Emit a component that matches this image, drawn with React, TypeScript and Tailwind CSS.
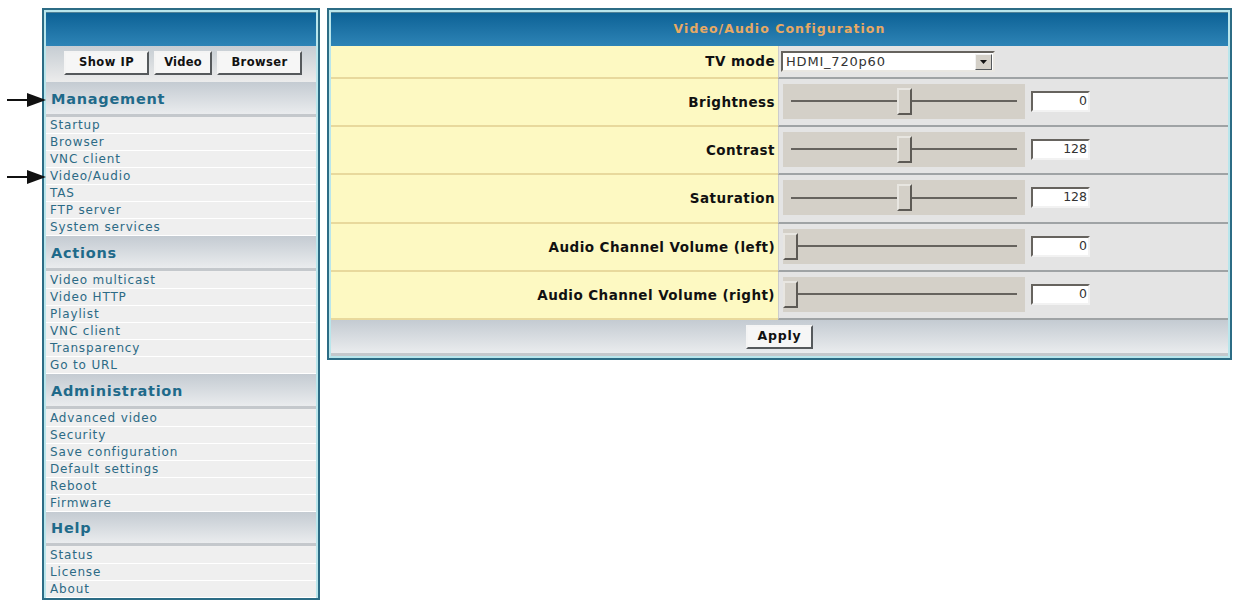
const sections = [
  { title: "Management", height: "h-[35px]", list: "pt-0", items: ["Startup", "Browser", "VNC client", "Video/Audio", "TAS", "FTP server", "System services"] },
  { title: "Actions", height: "h-[35px]", list: "pt-[1px]", items: ["Video multicast", "Video HTTP", "Playlist", "VNC client", "Transparency", "Go to URL"] },
  { title: "Administration", height: "h-[35px]", list: "pt-[1px]", items: ["Advanced video", "Security", "Save configuration", "Default settings", "Reboot", "Firmware"] },
  { title: "Help", height: "h-[34px]", list: "pt-[1px]", items: ["Status", "License", "About"] },
];

const sliders = [
  { label: "Brightness", pos: 114, value: "0", height: "h-[48px]" },
  { label: "Contrast", pos: 114, value: "128", height: "h-[48px]" },
  { label: "Saturation", pos: 114, value: "128", height: "h-[49px]" },
  { label: "Audio Channel Volume (left)", pos: 0, value: "0", height: "h-[48px]" },
  { label: "Audio Channel Volume (right)", pos: 0, value: "0", height: "h-[48px]" },
];

function Arrow({ top }: { top: string }) {
  return (
    <svg className={`absolute left-[7px] ${top}`} width="40" height="16" viewBox="0 0 40 16">
      <rect x="0" y="7" width="22" height="2" fill="#111" />
      <polygon points="20,1 39,8 20,15" fill="#111" />
    </svg>
  );
}

function RaisedButton({ label, width, text }: { label: string; width: string; text: string }) {
  return (
    <button
      className={`h-[24px] ${width} ${text} border-2 border-t-[#f4f4f4] border-l-[#f4f4f4] border-r-[#55595c] border-b-[#55595c] bg-[#f6f6f6] font-bold text-[#111]`}
    >
      {label}
    </button>
  );
}

function Slider({ pos, value }: { pos: number; value: string }) {
  return (
    <div className="flex items-center pb-[2px]">
      <div className="relative ml-[4px] flex h-[35px] w-[242px] items-center bg-[#d4d0c8] pl-[8px]">
        <div className="h-[2px] w-[226px] bg-[#66635e]" />
        <div
          className="absolute top-[4px] h-[27px] w-[15px] border-2 border-t-[#e8e6e1] border-l-[#e8e6e1] border-r-[#5d5a55] border-b-[#5d5a55] bg-[#d4d0c8]"
          style={{ left: pos }}
        />
      </div>
      <div className="ml-[6px] flex h-[21px] w-[59px] items-center justify-end border-2 border-t-[#66635e] border-l-[#66635e] border-r-[#f2f2f2] border-b-[#f2f2f2] bg-white pr-[1px] text-[12.5px] text-[#333]">
        {value}
      </div>
    </div>
  );
}

export default function App() {
  return (
    <div className="relative flex min-h-[601px] items-start gap-[7px] bg-white pl-[42px] pt-[8px] font-['DejaVu_Sans','Liberation_Sans',sans-serif]">
      <Arrow top="top-[92px]" />
      <Arrow top="top-[169px]" />

      <aside className="w-[278px] border-2 border-[#2c6c85] bg-[#f0f0f0]">
        <div className="border-2 border-b-0 border-[#b9e6ec]">
          <div className="h-[34px] border-t border-[#4f8298] bg-gradient-to-b from-[#0b6296] to-[#2d84b6]" />
          <div className="flex h-[36px] items-center gap-[5px] bg-gradient-to-b from-[#c6cdd3] to-[#ececec] pb-[2px] pl-[18px]">
            <RaisedButton label="Show IP" width="w-[85px]" text="text-[11.5px] tracking-[0.5px]" />
            <RaisedButton label="Video" width="w-[58px]" text="text-[11.5px] tracking-[0.2px]" />
            <RaisedButton label="Browser" width="w-[85px]" text="text-[11.5px] tracking-[0.4px]" />
          </div>
          {sections.map((section) => (
            <section key={section.title}>
              <h2 className={`flex ${section.height} items-center border-b-[3px] border-[#c4c8cc] bg-gradient-to-b from-[#c4cbd2] to-[#eaecee] pl-[5px] pt-[3px] text-[14.5px] font-bold tracking-[0.75px] text-[#1f6a8a]`}>
                {section.title}
              </h2>
              <ul className={section.list}>
                {section.items.map((item) => (
                  <li
                    key={item}
                    className="flex h-[17px] items-center border-b border-white bg-[#efefef] pl-[4px] text-[12px] tracking-[0.85px] text-[#2c6a85]"
                  >
                    {item}
                  </li>
                ))}
              </ul>
            </section>
          ))}
        </div>
      </aside>

      <main className="w-[905px] border-2 border-[#2c6c85] bg-white">
        <div className="border-2 border-[#b9e6ec]">
          <div className="flex h-[34px] items-center justify-center border-t border-[#4f8298] bg-gradient-to-b from-[#0b6296] to-[#2d84b6] text-[12.5px] font-bold tracking-[1.05px] text-[#e8a963]">
            Video/Audio Configuration
          </div>

          <div className="flex h-[33px]">
            <div className="flex w-[447px] items-center justify-end border-b-2 border-[#e8d99c] bg-[#fdf9c2] pr-[3px] text-[13.5px] font-bold tracking-[0.45px] text-[#111]">
              TV mode
            </div>
            <div className="flex flex-1 items-center border-b-2 border-l border-[#9fa3a5] border-l-[#ccc] bg-[#e4e4e4] pl-[2px]">
              <div className="flex h-[21px] w-[214px] items-center justify-between border-2 border-t-[#66635e] border-l-[#66635e] border-r-[#e8e6e1] border-b-[#e8e6e1] bg-white pl-[3px] pr-px text-[13px] tracking-[0.8px] text-[#333]">
                HDMI_720p60
                <span className="flex h-[16px] w-[17px] items-center justify-center border border-t-[#f2f2f2] border-l-[#f2f2f2] border-r-[#55595c] border-b-[#55595c] bg-[#d4d0c8]">
                  <svg width="7" height="4" viewBox="0 0 7 4">
                    <polygon points="0,0 7,0 3.5,4" fill="#111" />
                  </svg>
                </span>
              </div>
            </div>
          </div>

          {sliders.map((row) => (
            <div key={row.label} className={`flex ${row.height}`}>
              <div className="flex w-[447px] items-center justify-end border-b-2 border-[#e8d99c] bg-[#fdf9c2] pr-[3px] text-[13.5px] font-bold tracking-[0.45px] text-[#111]">
                {row.label}
              </div>
              <div className="flex flex-1 items-center border-b-2 border-l border-[#9fa3a5] border-l-[#ccc] bg-[#e4e4e4]">
                <Slider pos={row.pos} value={row.value} />
              </div>
            </div>
          ))}

          <div className="flex h-[36px] items-center justify-center border-b-[3px] border-[#c4c8cc] bg-gradient-to-b from-[#c4cbd2] to-[#eaecee]">
            <RaisedButton label="Apply" width="w-[67px]" text="text-[12.5px] tracking-[0.8px]" />
          </div>
        </div>
      </main>
    </div>
  );
}
